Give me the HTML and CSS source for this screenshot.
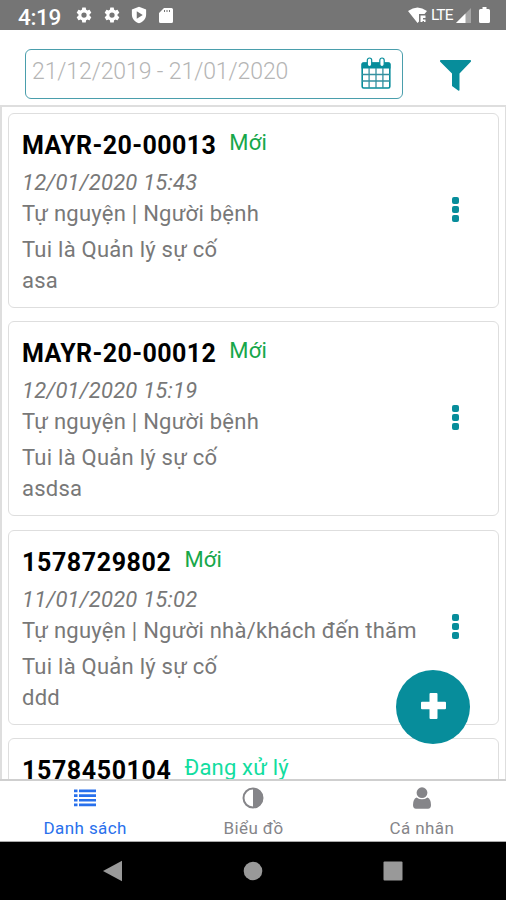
FILE: index.html
```html
<!DOCTYPE html>
<html lang="vi">
<head>
<meta charset="utf-8">
<title>Danh sách</title>
<link rel="stylesheet" href="styles.css">
</head>
<body>
<div class="phone">
  <header class="status">
    <span class="clock">4:19</span>
    <svg class="status-icon gear" viewBox="0 0 24 24"><path fill-rule="evenodd" d="M19.4 13a7.500 7.500 0 0 0 0-2l2.100-1.600a.5.5 0 0 0 .1-.6l-2-3.500a.5.5 0 0 0-.6-.2l-2.500 1a7.300 7.300 0 0 0-1.700-1l-.4-2.700a.5.5 0 0 0-.4-.4h-4a.5.5 0 0 0-.4.400l-.4 2.700a7.300 7.300 0 0 0-1.700 1l-2.500-1a.5.5 0 0 0-.6.200l-2 3.500a.5.5 0 0 0 .1.600L4.600 11a7.500 7.500 0 0 0 0 2l-2.100 1.600a.5.5 0 0 0-.1.600l2 3.500c.1.200.4.300.6.200l2.500-1a7.300 7.300 0 0 0 1.700 1l.4 2.700c0 .2.200.4.400.4h4c.2 0 .4-.2.400-.4l.4-2.700a7.300 7.300 0 0 0 1.700-1l2.500 1c.2.100.5 0 .6-.2l2-3.500a.5.5 0 0 0-.1-.6zM12 15.500a3.500 3.500 0 1 1 0-7 3.500 3.500 0 0 1 0 7z"/></svg>
    <svg class="status-icon gear" viewBox="0 0 24 24"><path fill-rule="evenodd" d="M19.4 13a7.500 7.500 0 0 0 0-2l2.100-1.600a.5.5 0 0 0 .1-.6l-2-3.500a.5.5 0 0 0-.6-.2l-2.500 1a7.300 7.300 0 0 0-1.700-1l-.4-2.700a.5.5 0 0 0-.4-.4h-4a.5.5 0 0 0-.4.400l-.4 2.700a7.300 7.300 0 0 0-1.700 1l-2.500-1a.5.5 0 0 0-.6.200l-2 3.500a.5.5 0 0 0 .1.600L4.600 11a7.500 7.500 0 0 0 0 2l-2.100 1.600a.5.5 0 0 0-.1.600l2 3.500c.1.200.4.300.6.200l2.500-1a7.300 7.300 0 0 0 1.700 1l.4 2.700c0 .2.200.4.400.4h4c.2 0 .4-.2.400-.4l.4-2.700a7.300 7.300 0 0 0 1.700-1l2.500 1c.2.100.5 0 .6-.2l2-3.500a.5.5 0 0 0-.1-.6zM12 15.500a3.500 3.500 0 1 1 0-7 3.500 3.500 0 0 1 0 7z"/></svg>
    <svg class="status-icon shield" viewBox="0 0 24 24"><path fill-rule="evenodd" d="M12 1l9.500 3.700V11c0 6-4 10.400-9.500 12C6.500 21.400 2.500 17 2.500 11V4.700zM9 7v10l8-5z"/></svg>
    <svg class="status-icon sdcard" viewBox="0 0 14 17"><path fill-rule="evenodd" d="M5 1h7.500Q14 1 14 2.500v12Q14 16 12.500 16h-11Q0 16 0 14.500V6zM5 3v2h1V3zm2.500 0v2h1V3zM10 3v2h1V3z"/></svg>
    <span class="spacer"></span>
    <svg class="wifi" viewBox="0 0 19 16"><path d="M0 4Q9.500-3 19 4l-2.500 3H11v7.500L9.500 16z"/><path d="M12.500 8.500h5v2.500h-2.500v1.500h2.500V15H16v-1h-1.500v1h-2z"/></svg>
    <span class="lte">LTE</span>
    <svg class="signal" viewBox="0 0 15 15"><path opacity=".35" d="M15 0v15H0z"/><path d="M9.500 5.500V15H0z"/></svg>
    <svg class="battery" viewBox="0 0 11 16"><path d="M3.500 0h4v2H9.500Q11 2 11 3.500v11Q11 16 9.500 16h-8Q0 16 0 14.500v-11Q0 2 1.500 2h2z"/></svg>
  </header>

  <div class="toolbar">
    <div class="date-range">
      <span class="date-text">21/12/2019 - 21/01/2020</span>
      <svg class="calendar" viewBox="0 0 30 32"><rect x="1.200" y="6" width="27.600" height="25" rx="1.500" fill="#fff" stroke="#078d9b" stroke-width="1.600"/><path d="M.5 11.500V7q0-1.500 1.500-1.500h26Q29.500 5.500 29.500 7v4.500z" fill="#078d9b"/><path d="M1 17.500h28M1 24h28M8.100 11v20M15 11v20M21.900 11v20" stroke="#3591a0" stroke-width="1.300"/><rect x="6.300" y="1" width="4.400" height="8.500" rx="2.200" fill="#fff" stroke="#078d9b" stroke-width="1.200"/><rect x="18.800" y="1" width="4.400" height="8.500" rx="2.200" fill="#fff" stroke="#078d9b" stroke-width="1.200"/></svg>
    </div>
    <svg class="filter" viewBox="0 0 31 31"><path d="M.8 0h29.400q.8 0 .8.800v.7L19.500 13.500V30q0 1-1 .8L12 26V13.500L0 1.500V.8Q0 0 .8 0z"/></svg>
  </div>

  <main class="list">
    <article class="card">
      <div class="info">
        <div class="heading"><h2>MAYR-20-00013</h2><span class="state">Mới</span></div>
        <time>12/01/2020 15:43</time>
        <p>Tự nguyện | Người bệnh</p>
        <p class="title">Tui là Quản lý sự cố</p>
        <p>asa</p>
      </div>
      <div class="more"><i></i><i></i><i></i></div>
    </article>
    <article class="card">
      <div class="info">
        <div class="heading"><h2>MAYR-20-00012</h2><span class="state">Mới</span></div>
        <time>12/01/2020 15:19</time>
        <p>Tự nguyện | Người bệnh</p>
        <p class="title">Tui là Quản lý sự cố</p>
        <p>asdsa</p>
      </div>
      <div class="more"><i></i><i></i><i></i></div>
    </article>
    <article class="card">
      <div class="info">
        <div class="heading"><h2 class="numeric">1578729802</h2><span class="state">Mới</span></div>
        <time>11/01/2020 15:02</time>
        <p>Tự nguyện | Người nhà/khách đến thăm</p>
        <p class="title">Tui là Quản lý sự cố</p>
        <p>ddd</p>
      </div>
      <div class="more"><i></i><i></i><i></i></div>
    </article>
    <article class="card">
      <div class="info">
        <div class="heading"><h2 class="numeric">1578450104</h2><span class="state processing">Đang xử lý</span></div>
      </div>
    </article>
    <button class="fab" aria-label="Thêm"><svg viewBox="0 0 25 26"><path d="M9.500 0h6q1 0 1 1v7.700H24q1 0 1 1v5.600q0 1-1 1h-7.500V25q0 1-1 1h-6q-1 0-1-1v-8.700H1q-1 0-1-1V9.700q0-1 1-1h7.500V1q0-1 1-1z"/></svg></button>
  </main>

  <nav class="tabs">
    <a class="tab active"><svg viewBox="0 0 22 22"><path d="M0 2.500h3.500v2.700H0zM5 2.500h17v2.700H5zM0 7.200h3.500v2.700H0zM5 7.200h17v2.700H5zM0 11.900h3.500v2.700H0zM5 11.900h17v2.700H5zM0 16.600h3.500v2.700H0zM5 16.600h17v2.700H5z"/></svg><span>Danh sách</span></a>
    <a class="tab"><svg viewBox="0 0 22 22"><circle cx="11" cy="11" r="9.500" fill="none" stroke="currentColor" stroke-width="2"/><path d="M11 1a10 10 0 0 1 0 20z"/></svg><span>Biểu đồ</span></a>
    <a class="tab"><svg viewBox="0 0 22 22"><circle cx="11" cy="5.700" r="5.400"/><path d="M5.500 10.500q5.500 3.700 11 0 3.500 1.500 3.500 7.500 0 3.700-3 3.700H5q-3 0-3-3.700 0-6 3.500-7.500z"/></svg><span>Cá nhân</span></a>
  </nav>

  <footer class="system">
    <svg viewBox="0 0 20 22"><path d="M0 11L19 .7v20.600z"/></svg>
    <svg viewBox="0 0 20 22"><circle cx="10" cy="11" r="9.300"/></svg>
    <svg viewBox="0 0 20 22"><rect x=".5" y="1.500" width="19" height="19" rx="1"/></svg>
  </footer>
</div>
</body>
</html>
```

FILE: styles.css
```css
* { box-sizing: border-box; }
body { margin: 0; font-family: Roboto, sans-serif; background: #fff; }
h2, p { margin: 0; }
svg { display: block; flex: none; }
.phone { width: 506px; height: 900px; display: flex; flex-direction: column; overflow: hidden; }

.status { height: 30px; flex: none; display: flex; align-items: center; background: #757575; color: #fff; padding: 0 16px 0 18px; }
.status svg { fill: #fff; }
.clock { width: 57px; font-size: 22.500px; font-weight: 500; line-height: 30px; padding-top: 3px; letter-spacing: -.3px; }
.status-icon { width: 18px; height: 18px; margin-right: 9.500px; }
.status-icon.sdcard { width: 14px; height: 17px; margin-left: 1px; }
.spacer { flex: 1; }
.wifi { width: 19px; height: 16px; }
.lte { width: 25px; margin-left: 4px; font-size: 15.500px; letter-spacing: -.9px; }
.signal { width: 15px; height: 15px; }
.battery { width: 11px; height: 16px; margin-left: 8px; }

.toolbar { height: 75px; flex: none; display: flex; align-items: flex-start; padding: 19px 0 0 25px; }
.date-range { width: 378px; height: 50px; border: 1.500px solid #4a9eac; border-radius: 6px; display: flex; justify-content: space-between; padding: 7px 11px 0 6px; }
.date-text { font-size: 23px; line-height: 30px; color: #b5b5b5; letter-spacing: -.1px; white-space: nowrap; font-weight: 300; }
.calendar { width: 30px; height: 32px; }
.filter { width: 31px; height: 31px; margin: 11px 0 0 37px; fill: #078d9b; }

.list { position: relative; flex: 1; min-height: 0; overflow: hidden; border: 2px solid #dedede; border-right-width: 1px; border-bottom: 0; padding: 6px 6px 0; }
.card { height: 195px; margin-bottom: 13.400px; border: 1.500px solid #dedede; border-radius: 6px; padding: 14px 38px 0 13px; display: flex; justify-content: space-between; }
.heading { display: flex; height: 39px; }
h2 { font-size: 25px; line-height: 36px; font-weight: 700; color: #000; letter-spacing: .42px; }
.numeric { letter-spacing: .6px; }
.state { margin-left: 13px; font-size: 22px; line-height: 29px; color: #17a74a; letter-spacing: .2px; }
.state.processing { color: #12dda0; }
time, .info p { display: block; font-size: 22px; line-height: 31px; color: #787878; white-space: nowrap; letter-spacing: .25px; }
time { letter-spacing: .2px; font-style: italic; }
.info .title { margin-top: 5px; }
.more { width: 8px; padding-top: 69px; }
.more i { display: block; width: 7px; height: 7px; margin-bottom: 2px; border-radius: 2px; background: #078d9b; }
.fab { position: absolute; right: 35px; bottom: 35px; width: 74px; height: 74px; padding: 0; border: 0; border-radius: 50%; background: #078d9b; display: flex; align-items: center; justify-content: center; }
.fab svg { width: 25px; height: 26px; fill: #fff; margin-bottom: 3px; }

.tabs { height: 63px; flex: none; display: flex; border-top: 2px solid #cfcfcf; border-bottom: 1px solid #aaa; padding-left: 1px; }
.tab { flex: 1; display: flex; flex-direction: column; align-items: center; padding-top: 6px; color: #858589; font-size: 17px; line-height: 20px; letter-spacing: .4px; }
.tab svg { width: 22px; height: 22px; fill: currentColor; margin-bottom: 9px; }
.tab.active { color: #2870ec; }

.system { height: 58px; flex: none; background: #000; display: flex; justify-content: space-between; padding: 18px 103px 0; }
.system svg { width: 20px; height: 22px; fill: #999; }
```
